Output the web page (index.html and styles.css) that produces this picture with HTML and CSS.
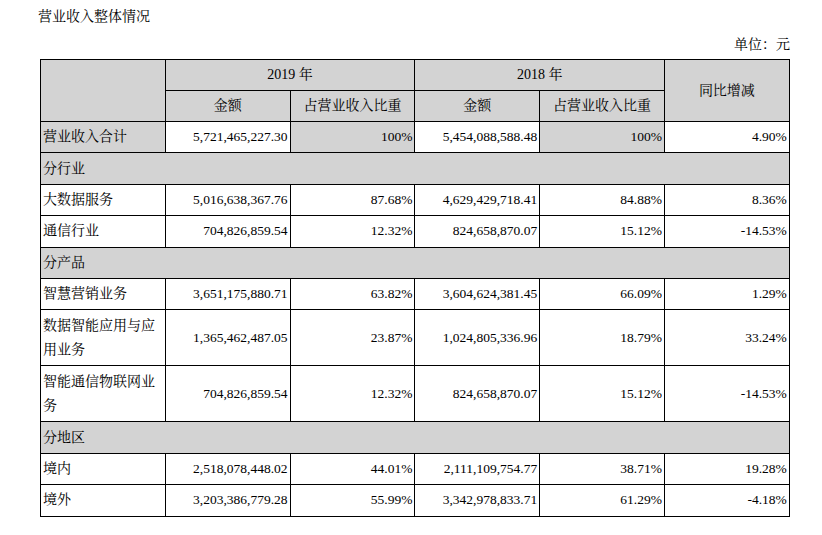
FILE: index.html
```html
<!DOCTYPE html>
<html lang="zh">
<head>
<meta charset="utf-8">
<title>营业收入整体情况</title>
<link rel="stylesheet" href="styles.css">
</head>
<body>
<div class="page">
  <div class="title">营业收入整体情况</div>
  <div class="unit">单位：元</div>
  <table class="rev">
    <colgroup>
      <col class="c"><col class="c"><col class="c"><col class="c"><col class="c"><col class="c">
    </colgroup>
    <tr class="h">
      <td class="g" rowspan="2"></td>
      <td class="g ctr" colspan="2">2019 年</td>
      <td class="g ctr" colspan="2">2018 年</td>
      <td class="g ctr" rowspan="2">同比增减</td>
    </tr>
    <tr class="h">
      <td class="g ctr">金额</td>
      <td class="g ctr">占营业收入比重</td>
      <td class="g ctr">金额</td>
      <td class="g ctr">占营业收入比重</td>
    </tr>
    <tr>
      <td class="g lbl">营业收入合计</td>
      <td class="num">5,721,465,227.30</td>
      <td class="g num">100%</td>
      <td class="num">5,454,088,588.48</td>
      <td class="g num">100%</td>
      <td class="num">4.90%</td>
    </tr>
    <tr>
      <td class="g lbl" colspan="6">分行业</td>
    </tr>
    <tr>
      <td class="lbl">大数据服务</td>
      <td class="num">5,016,638,367.76</td>
      <td class="num">87.68%</td>
      <td class="num">4,629,429,718.41</td>
      <td class="num">84.88%</td>
      <td class="num">8.36%</td>
    </tr>
    <tr>
      <td class="lbl">通信行业</td>
      <td class="num">704,826,859.54</td>
      <td class="num">12.32%</td>
      <td class="num">824,658,870.07</td>
      <td class="num">15.12%</td>
      <td class="num">-14.53%</td>
    </tr>
    <tr>
      <td class="g lbl" colspan="6">分产品</td>
    </tr>
    <tr>
      <td class="lbl">智慧营销业务</td>
      <td class="num">3,651,175,880.71</td>
      <td class="num">63.82%</td>
      <td class="num">3,604,624,381.45</td>
      <td class="num">66.09%</td>
      <td class="num">1.29%</td>
    </tr>
    <tr class="tall">
      <td class="lbl">数据智能应用与应用业务</td>
      <td class="num">1,365,462,487.05</td>
      <td class="num">23.87%</td>
      <td class="num">1,024,805,336.96</td>
      <td class="num">18.79%</td>
      <td class="num">33.24%</td>
    </tr>
    <tr class="tall">
      <td class="lbl">智能通信物联网业务</td>
      <td class="num">704,826,859.54</td>
      <td class="num">12.32%</td>
      <td class="num">824,658,870.07</td>
      <td class="num">15.12%</td>
      <td class="num">-14.53%</td>
    </tr>
    <tr>
      <td class="g lbl" colspan="6">分地区</td>
    </tr>
    <tr>
      <td class="lbl">境内</td>
      <td class="num">2,518,078,448.02</td>
      <td class="num">44.01%</td>
      <td class="num">2,111,109,754.77</td>
      <td class="num">38.71%</td>
      <td class="num">19.28%</td>
    </tr>
    <tr>
      <td class="lbl">境外</td>
      <td class="num">3,203,386,779.28</td>
      <td class="num">55.99%</td>
      <td class="num">3,342,978,833.71</td>
      <td class="num">61.29%</td>
      <td class="num">-4.18%</td>
    </tr>
  </table>
</div>
</body>
</html>
```

FILE: styles.css
```css
html, body {
  margin: 0;
  padding: 0;
  background: #ffffff;
}

body {
  font-family: "Liberation Serif", "Noto Serif CJK SC", "Noto Sans CJK SC", serif;
  font-size: 14px;
  color: #000000;
}

.page {
  width: 822px;
  padding: 8px 0 0 0;
}

.title {
  margin-left: 38px;
  line-height: 18px;
  height: 18px;
}

.unit {
  width: 790px;
  text-align: right;
  line-height: 18px;
  margin-top: 10px;
  margin-bottom: 5px;
}

.rev {
  margin-left: 40px;
  width: 749px;
  table-layout: fixed;
  border-collapse: collapse;
}

.rev .c {
  width: 124.8px;
}

.rev td {
  border: 1px solid #000000;
  padding: 0 2px;
  line-height: 24px;
  vertical-align: middle;
  height: 31.4px;
  box-sizing: border-box;
}

.rev tr.h td {
  height: 31px;
}

.rev tr.tall td {
  height: 56px;
}

.rev td.g {
  background: #d3d3d3;
}

.rev td.ctr {
  text-align: center;
}

.rev td.lbl {
  text-align: left;
}

.rev td.num {
  text-align: right;
  font-size: 13.5px;
}
```
